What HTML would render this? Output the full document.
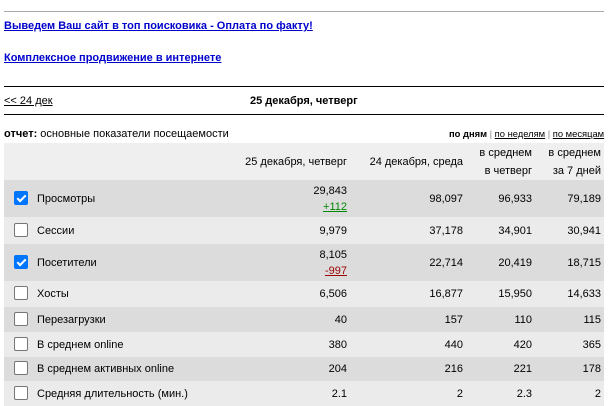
<!DOCTYPE html>
<html><head><meta charset="utf-8"><style>
body{margin:0;width:608px;height:405px;overflow:hidden;background:#fff;font-family:"Liberation Sans",Arial,sans-serif;font-size:11px;color:#000;position:relative}
.a{position:absolute;white-space:nowrap}
.hr{position:absolute;left:4px;width:600px;height:1px}
a{color:#00c;font-weight:bold}
table{position:absolute;left:4px;top:143px;width:600px;border-collapse:collapse}
td{padding:0 3px 0 0;text-align:right;font-size:11px}
td.l{text-align:left;padding-left:10px}
.cb{display:inline-block;width:12px;height:12px;border:1px solid #767676;border-radius:2px;background:#fff;vertical-align:middle;margin-right:9px;position:relative;top:-1px}
.cb.on{background:#0075ff;border-color:#0075ff}
.cb.on:after{content:"";position:absolute;left:4px;top:1px;width:3px;height:7px;border:solid #fff;border-width:0 2px 2px 0;transform:rotate(45deg)}
.d{background:#dcdcdc}.w{background:#ebebeb}
</style></head><body>
<div class="hr" style="top:11px;background:#aaa"></div>
<div class="a" style="left:4px;top:20px"><a href="#">Выведем Ваш сайт в топ поисковика - Оплата по факту!</a></div>
<div class="a" style="left:4px;top:52px"><a href="#">Комплексное продвижение в интернете</a></div>
<div class="hr" style="top:86px;background:#000"></div>
<div class="a" style="left:4px;top:95px;text-decoration:underline">&lt;&lt; 24 дек</div>
<div class="a" style="left:250px;top:95px;font-weight:bold">25 декабря, четверг</div>
<div class="hr" style="top:114px;background:#000"></div>
<div class="a" style="left:4px;top:128px"><b>отчет:</b> основные показатели посещаемости</div>
<div class="a" style="left:449px;top:128px;font-size:9.4px"><b>по дням</b> <span style="color:#888">|</span> <u>по неделям</u> <span style="color:#888">|</span> <u>по месяцам</u></div>
<table>
<tr style="background:#efefef;height:37px"><td class="l"></td><td style="width:105px">25 декабря, четверг</td><td style="width:113px">24 декабря, среда</td><td style="width:66px;line-height:18px">в среднем<br>в четверг</td><td style="width:66px;line-height:18px">в среднем<br>за 7 дней</td></tr>
<tr class="d" style="height:37px"><td class="l"><span class="cb on"></span>Просмотры</td><td style="line-height:16px">29,843<br><u style="color:#080">+112</u></td><td>98,097</td><td>96,933</td><td>79,189</td></tr>
<tr class="w" style="height:27px"><td class="l"><span class="cb"></span>Сессии</td><td>9,979</td><td>37,178</td><td>34,901</td><td>30,941</td></tr>
<tr class="d" style="height:37px"><td class="l"><span class="cb on"></span>Посетители</td><td style="line-height:16px">8,105<br><u style="color:#900">-997</u></td><td>22,714</td><td>20,419</td><td>18,715</td></tr>
<tr class="w" style="height:26px"><td class="l"><span class="cb"></span>Хосты</td><td>6,506</td><td>16,877</td><td>15,950</td><td>14,633</td></tr>
<tr class="d" style="height:25px"><td class="l"><span class="cb"></span>Перезагрузки</td><td>40</td><td>157</td><td>110</td><td>115</td></tr>
<tr class="w" style="height:25px"><td class="l"><span class="cb"></span>В среднем online</td><td>380</td><td>440</td><td>420</td><td>365</td></tr>
<tr class="d" style="height:24px"><td class="l"><span class="cb"></span>В среднем активных online</td><td>204</td><td>216</td><td>221</td><td>178</td></tr>
<tr class="w" style="height:25px"><td class="l"><span class="cb"></span>Средняя длительность (мин.)</td><td>2.1</td><td>2</td><td>2.3</td><td>2</td></tr>
</table>
</body></html>
